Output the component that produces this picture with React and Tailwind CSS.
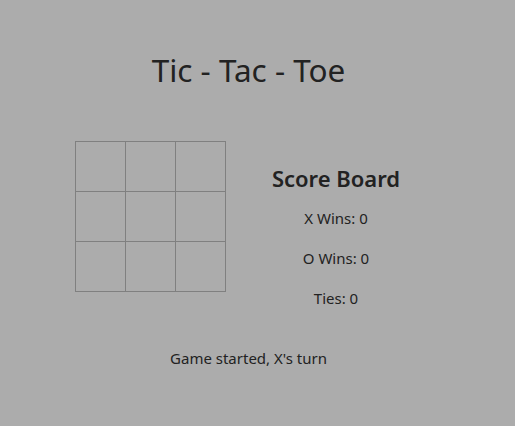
import React, { useState } from 'react';

const App = () => {
  const [board] = useState(Array(9).fill(null));
  const [scores] = useState({ x: 0, o: 0, ties: 0 });

  return (
    <div className="min-h-[426px] w-full bg-[#acacac] text-[#222222] font-['Segoe_UI','Noto_Sans',sans-serif]">
      <div className="w-[497px] flex flex-col items-center pt-[48px]">
        <h1 className="text-[31.5px] leading-[44px]">Tic - Tac - Toe</h1>

        <div className="flex items-start gap-[24px] mt-[49px]">
          {/* Board */}
          <div className="grid grid-cols-3 border-l border-t border-[#808080]">
            {board.map((cell, i) => (
              <div
                key={i}
                className="w-[50px] h-[50px] border-r border-b border-[#808080]"
              >
                {cell}
              </div>
            ))}
          </div>

          {/* Score board */}
          <div className="w-[172px] flex flex-col items-center pt-[22px]">
            <h2 className="text-[22px] font-semibold leading-[30px]">Score Board</h2>
            <p className="text-[15px] leading-[20px] mt-[15px]">X Wins: {scores.x}</p>
            <p className="text-[15px] leading-[20px] mt-[20px]">O Wins: {scores.o}</p>
            <p className="text-[15px] leading-[20px] mt-[20px]">Ties: {scores.ties}</p>
          </div>
        </div>

        <p className="text-[15px] leading-[20px] mt-[40px]">Game started, X's turn</p>
      </div>
    </div>
  );
};

export default App;
